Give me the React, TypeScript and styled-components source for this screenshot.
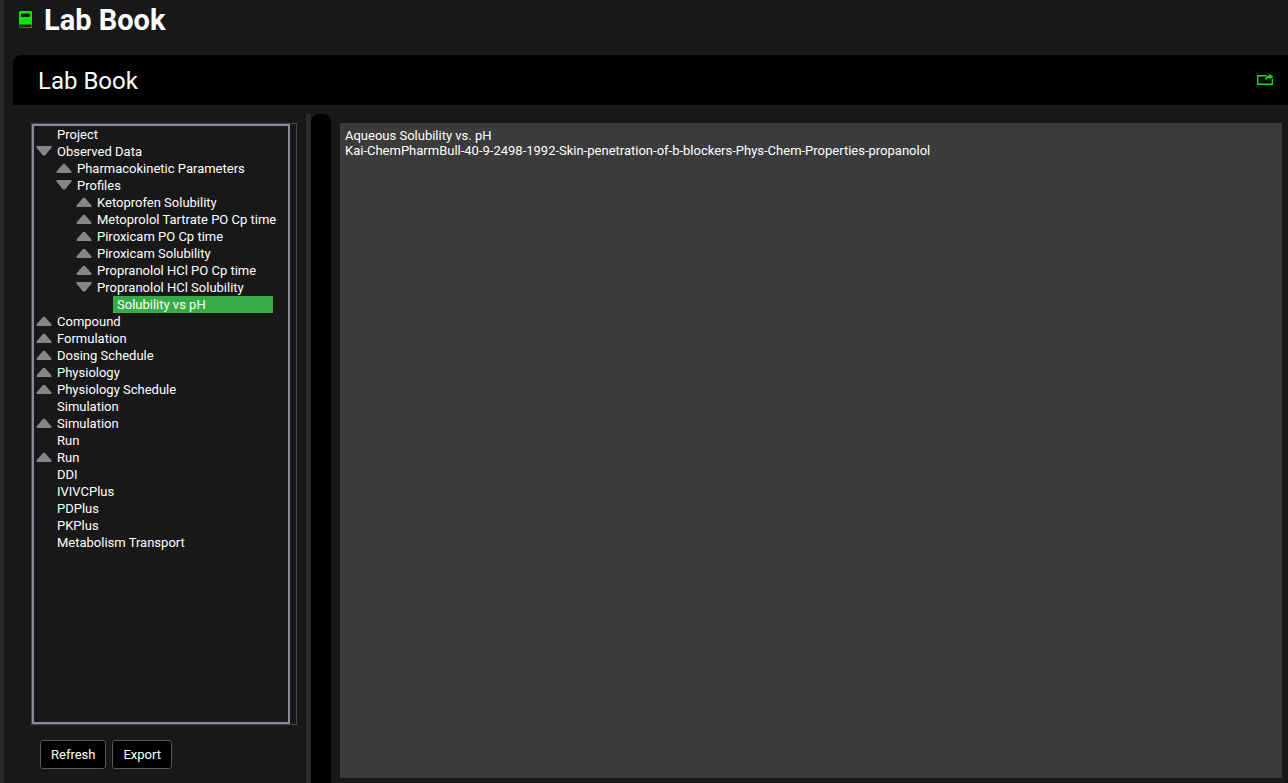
import React, { useState } from "react";
import styled, { createGlobalStyle, css } from "styled-components";

const GlobalStyle = createGlobalStyle`
  * { box-sizing: border-box; }
  body {
    margin: 0;
    background: #181818;
    color: #fff;
    font-family: Roboto, "Liberation Sans", sans-serif;
    font-size: 13px;
  }
`;

const Page = styled.div`
  display: flex;
  flex-direction: column;
  min-height: 100vh;
  border-left: 4px solid #2b2b2b;
`;

const PageHeader = styled.header`
  display: flex;
  align-items: center;
  gap: 12px;
  height: 40px;
  margin-bottom: 15px;
  padding-left: 14px;
`;

const PageTitle = styled.h1`
  margin: 0;
  font-size: 29px;
  line-height: 40px;
  font-weight: 700;
`;

const PanelHeader = styled.header`
  display: flex;
  align-items: center;
  justify-content: space-between;
  height: 50px;
  margin-left: 9px;
  padding: 0 14px 0 25px;
  background: #000;
  border-top-left-radius: 8px;
`;

const PanelTitle = styled.h2`
  margin: 0;
  padding-top: 2px;
  font-size: 24px;
  line-height: 32px;
  font-weight: 400;
`;

const IconButton = styled.button`
  display: flex;
  padding: 0;
  border: 0;
  background: none;
  color: #14e00a;
  cursor: pointer;
`;

const Workspace = styled.main`
  display: flex;
  flex: 1;
  padding: 9px 6px 0 27px;
`;

const Sidebar = styled.aside`
  display: flex;
  flex-direction: column;
  flex: 0 0 275px;
  padding: 9px 9px 14px 0;
`;

const TreeFrame = styled.div`
  display: flex;
  flex: 1;
  padding-right: 6px;
  border: 1px solid #484848;
`;

const Tree = styled.ul`
  flex: 1;
  margin: 0;
  padding: 0 0 0 2px;
  border: 2px solid #888b95;
  list-style: none;
`;

const TreeItem = styled.li<{ $level: number }>`
  display: flex;
  align-items: center;
  gap: 1px;
  height: 17px;
  padding-left: ${(p) => p.$level * 20}px;
`;

const Toggle = styled.button`
  display: flex;
  padding: 0;
  border: 0;
  background: none;
  color: #868686;
  cursor: pointer;
`;

const ToggleSpace = styled.span`
  width: 16px;
`;

const Label = styled.button<{ $selected: boolean }>`
  height: 17px;
  padding: 0 4px;
  border: 0;
  background: none;
  color: #fff;
  font: inherit;
  line-height: 17px;
  text-align: left;
  white-space: nowrap;
  cursor: pointer;
  ${(p) =>
    p.$selected &&
    css`
      width: 160px;
      background: #35ac46;
    `}
`;

const Actions = styled.div`
  display: flex;
  gap: 6px;
  padding: 15px 0 0 9px;
`;

const ActionButton = styled.button`
  height: 29px;
  padding: 0 10px;
  border: 1px solid #5a5a5a;
  border-radius: 3px;
  background: #000;
  color: #fff;
  font: inherit;
  cursor: pointer;
`;

const Splitter = styled.div`
  flex: 0 0 25px;
  padding-left: 5px;
  background: linear-gradient(to right, #2b2b2b 5px, #181818 5px);
`;

const SplitterHandle = styled.div`
  height: 100%;
  border-radius: 8px 8px 0 0;
  background: #000;
`;

const Notes = styled.textarea`
  flex: 1;
  min-width: 0;
  margin: 9px 0 5px 9px;
  padding: 5px;
  border: 0;
  outline: 0;
  resize: none;
  background: #3b3b3b;
  color: #fff;
  font: inherit;
  line-height: 15px;
`;

const BookIcon = () => (
  <svg width="14" height="18" viewBox="0 0 14 18" aria-hidden="true">
    <path
      fill="#14e00a"
      fillRule="evenodd"
      d="M2.500 0H14V13.500H1V1.500A1.500 1.500 0 0 1 2.500 0ZM4 2.500a1 1 0 0 0-1 1v1.500a1 1 0 0 0 1 1h7a1 1 0 0 0 1-1V3.500a1 1 0 0 0-1-1Z"
    />
    <path fill="none" stroke="#149c10" d="M1.500 13v2.500q0 1 1 1H14M13.500 13v3.500" />
  </svg>
);

const ShareIcon = () => (
  <svg width="17" height="12" viewBox="0 0 17 12" fill="none" aria-hidden="true">
    <path stroke="currentColor" strokeWidth="1.4" d="M9.500 1.700H.7V10.300H15.300V4.500" />
    <path
      fill="currentColor"
      d="M12 0 16.500 2.500 12.500 5.200V3.800C10.800 3.800 10 4.500 9.300 6L8 5.300C8.500 2.800 9.800 1.500 12 1.400Z"
    />
  </svg>
);

const Arrow = ({ open }: { open: boolean }) => (
  <svg width="16" height="17" viewBox="0 0 16 17" aria-hidden="true">
    <path
      fill="currentColor"
      d={
        open
          ? "M1.500 3h13c1.300 0 1.600 1 .8 1.800L9.500 12.100c-.9.9-2.100.9-3 0L.7 4.800C-.1 4 .2 3 1.500 3Z"
          : "M1.500 13h13c1.300 0 1.600-1 .8-1.800L9.500 4.400c-.9-.9-2.100-.9-3 0L.7 11.200C-.1 12 .2 13 1.500 13Z"
      }
    />
  </svg>
);

type Node = { label: string; level: number; state?: "open" | "closed" };

const nodes: Node[] = [
  { label: "Project", level: 0 },
  { label: "Observed Data", level: 0, state: "open" },
  { label: "Pharmacokinetic Parameters", level: 1, state: "closed" },
  { label: "Profiles", level: 1, state: "open" },
  { label: "Ketoprofen Solubility", level: 2, state: "closed" },
  { label: "Metoprolol Tartrate PO Cp time", level: 2, state: "closed" },
  { label: "Piroxicam PO Cp time", level: 2, state: "closed" },
  { label: "Piroxicam Solubility", level: 2, state: "closed" },
  { label: "Propranolol HCl PO Cp time", level: 2, state: "closed" },
  { label: "Propranolol HCl Solubility", level: 2, state: "open" },
  { label: "Solubility vs pH", level: 3 },
  { label: "Compound", level: 0, state: "closed" },
  { label: "Formulation", level: 0, state: "closed" },
  { label: "Dosing Schedule", level: 0, state: "closed" },
  { label: "Physiology", level: 0, state: "closed" },
  { label: "Physiology Schedule", level: 0, state: "closed" },
  { label: "Simulation", level: 0 },
  { label: "Simulation", level: 0, state: "closed" },
  { label: "Run", level: 0 },
  { label: "Run", level: 0, state: "closed" },
  { label: "DDI", level: 0 },
  { label: "IVIVCPlus", level: 0 },
  { label: "PDPlus", level: 0 },
  { label: "PKPlus", level: 0 },
  { label: "Metabolism Transport", level: 0 },
];

const initialNotes =
  "Aqueous Solubility vs. pH\nKai-ChemPharmBull-40-9-2498-1992-Skin-penetration-of-b-blockers-Phys-Chem-Properties-propanolol";

export default function App() {
  const [selected, setSelected] = useState(10);

  return (
    <>
      <GlobalStyle />
      <Page>
        <PageHeader>
          <BookIcon />
          <PageTitle>Lab Book</PageTitle>
        </PageHeader>
        <PanelHeader>
          <PanelTitle>Lab Book</PanelTitle>
          <IconButton type="button" aria-label="Share">
            <ShareIcon />
          </IconButton>
        </PanelHeader>
        <Workspace>
          <Sidebar>
            <TreeFrame>
              <Tree>
                {nodes.map((node, i) => (
                  <TreeItem key={i} $level={node.level}>
                    {node.state ? (
                      <Toggle
                        type="button"
                        aria-label={`Toggle ${node.label}`}
                        aria-expanded={node.state === "open"}
                      >
                        <Arrow open={node.state === "open"} />
                      </Toggle>
                    ) : (
                      <ToggleSpace />
                    )}
                    <Label type="button" $selected={i === selected} onClick={() => setSelected(i)}>
                      {node.label}
                    </Label>
                  </TreeItem>
                ))}
              </Tree>
            </TreeFrame>
            <Actions>
              <ActionButton type="button">Refresh</ActionButton>
              <ActionButton type="button">Export</ActionButton>
            </Actions>
          </Sidebar>
          <Splitter>
            <SplitterHandle />
          </Splitter>
          <Notes aria-label="Notes" spellCheck={false} defaultValue={initialNotes} />
        </Workspace>
      </Page>
    </>
  );
}
